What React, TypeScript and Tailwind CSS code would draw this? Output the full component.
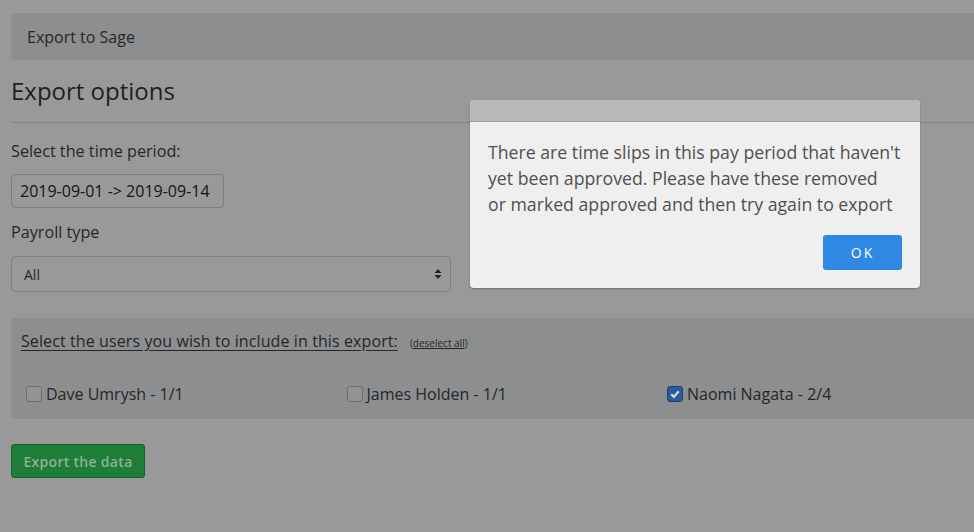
import React from 'react';

const users = [
  { name: 'Dave Umrysh - 1/1', checked: false },
  { name: 'James Holden - 1/1', checked: false },
  { name: 'Naomi Nagata - 2/4', checked: true },
];

const CheckBox = ({ checked }: { checked: boolean }) =>
  checked ? (
    <span className="flex h-[16px] w-[16px] items-center justify-center rounded-[3px] border border-[#1e3f6b] bg-[#295c9c]">
      <svg width="12" height="12" viewBox="0 0 12 12">
        <path d="M2.2 6.2 L4.9 8.9 L9.8 3.2" fill="none" stroke="#d8d8d8" strokeWidth="2.2" />
      </svg>
    </span>
  ) : (
    <span className="h-[16px] w-[16px] rounded-[3px] border border-[#6e6e6e] bg-[#939393]" />
  );

export default function App() {
  return (
    <div className="relative h-[532px] w-[974px] overflow-hidden bg-[#999999] font-['Open_Sans',sans-serif] text-[#262626]">
      <div className="w-[1000px] pl-[11px] pt-[13px]">
        <div className="flex h-[47px] items-center rounded-[4px] bg-[#8d8e90] pl-[16px] text-[16px]">
          Export to Sage
        </div>

        <h2 className="mt-[15px] text-[24px] leading-[32px] text-[#1f1f1f]">Export options</h2>
        <div className="mt-[15px] border-t border-[#858585]" />

        <div className="mt-[17px] text-[16.2px] leading-[22px]">Select the time period:</div>
        <div className="mt-[12px] flex h-[34px] w-[213px] items-center rounded-[4px] border border-[#7f7f7f] pl-[8px] text-[16px] text-[#141414]">
          2019-09-01 -&gt; 2019-09-14
        </div>

        <div className="mt-[13px] text-[16.2px] leading-[22px]">Payroll type</div>
        <div className="mt-[13px] flex h-[36px] w-[440px] items-center justify-between rounded-[4px] border border-[#818181] pl-[12px] pr-[8px] text-[14px]">
          <span>All</span>
          <svg width="8" height="12" viewBox="0 0 8 12">
            <path d="M4 1 L7.5 5 H0.5 Z M4 11 L7.5 7 H0.5 Z" fill="#222" />
          </svg>
        </div>

        <div className="mt-[26px] h-[101px] rounded-[4px] bg-[#8d8e90] pl-[10px] pt-[11px]">
          <div className="flex items-baseline">
            <span className="text-[16px] tracking-[0.1px] underline underline-offset-[3px]">Select the users you wish to include in this export:</span>
            <span className="ml-[12px] text-[10px]">
              (<span className="underline">deselect all</span>)
            </span>
          </div>
          <div className="mt-[29px] flex">
            {users.map((u) => (
              <div key={u.name} className="flex w-[320.5px] items-center gap-[4px] pl-[5px] text-[16px]">
                <CheckBox checked={u.checked} />
                <span>{u.name}</span>
              </div>
            ))}
          </div>
        </div>

        <button className="mt-[25px] h-[34px] w-[134px] rounded-[3px] border border-[#15612a] bg-[#1e7d36] text-[14px] font-semibold tracking-[0.3px] text-[#8fb295]">
          Export the data
        </button>
      </div>

      <div className="absolute left-[470px] top-[100px] w-[450px] overflow-hidden rounded-[4px] bg-[#efefef] shadow-[0_1px_2px_rgba(0,0,0,0.25)]">
        <div className="h-[22px] border-b border-[#9c9c9c] bg-[#b9b9b9]" />
        <div className="whitespace-nowrap pl-[18px] pr-[8px] pt-[17px] text-[17.7px] leading-[26px] text-[#4f4f4f]">
          There are time slips in this pay period that haven't
          <br />
          yet been approved. Please have these removed
          <br />
          or marked approved and then try again to export
        </div>
        <div className="flex justify-end px-[18px] pb-[18px] pt-[18px]">
          <button className="h-[35px] w-[79px] rounded-[3px] bg-[#3088e5] text-[14px] tracking-[2px] text-white">OK</button>
        </div>
      </div>
    </div>
  );
}
